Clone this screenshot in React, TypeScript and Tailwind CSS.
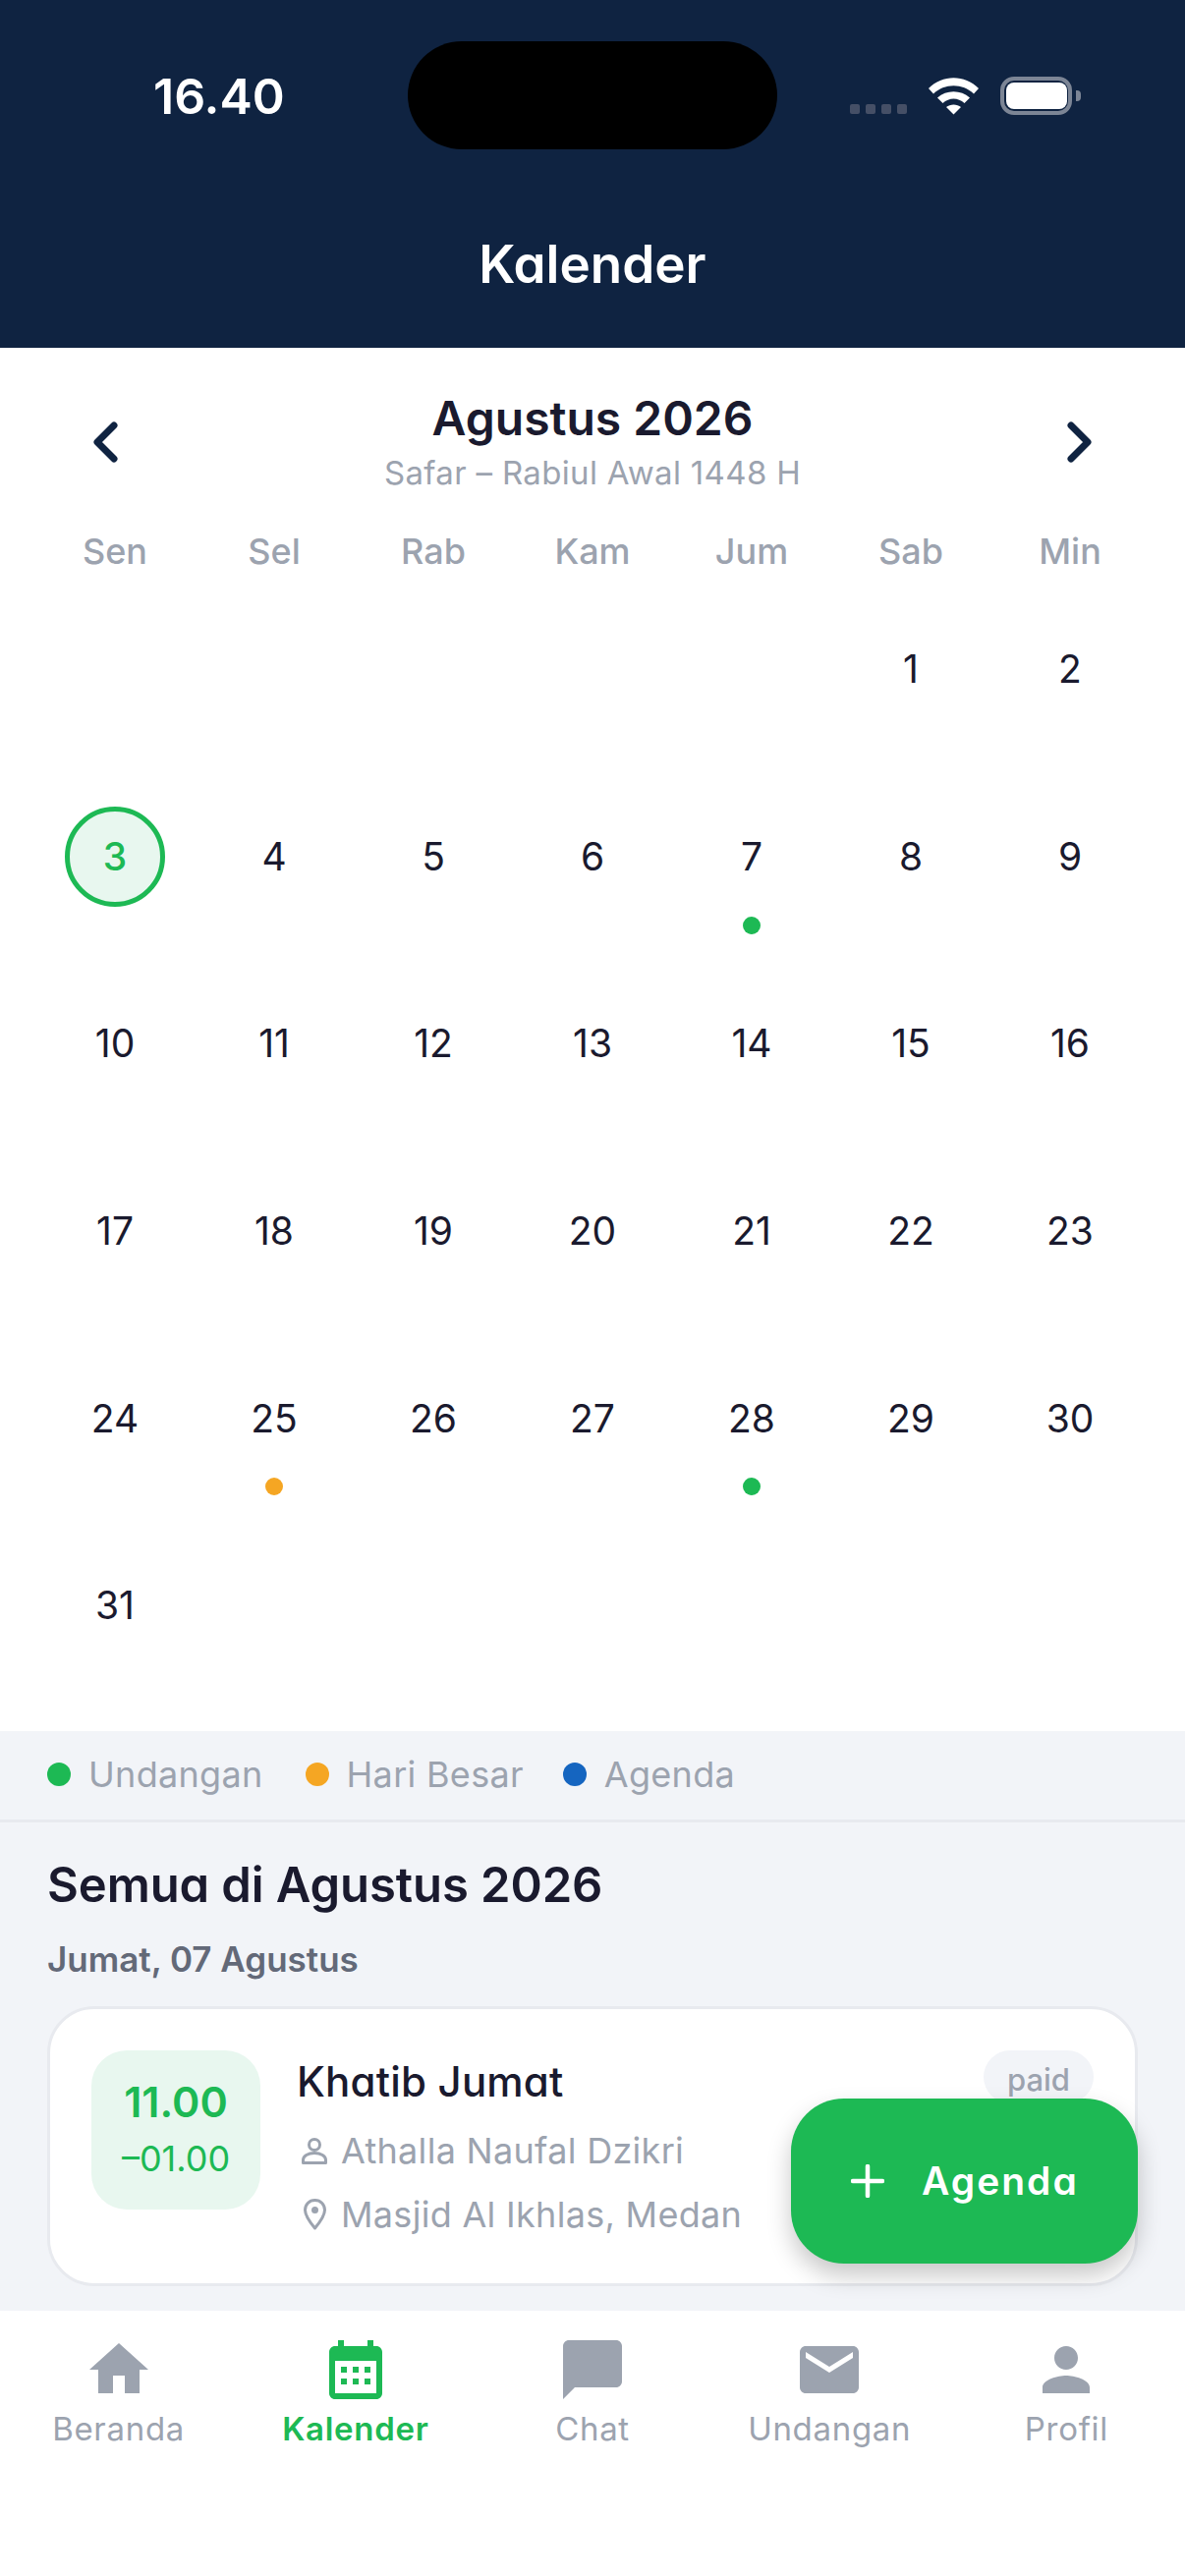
import React from "react";

const weekdays = ["Sen", "Sel", "Rab", "Kam", "Jum", "Sab", "Min"];
const blanks = [0, 1, 2, 3, 4];
const days = Array.from({ length: 31 }, (_, i) => i + 1);
const dots: Record<number, string> = { 7: "bg-[#1db954]", 25: "bg-[#f5a623]", 28: "bg-[#1db954]" };

const heading = "font-['Inter',sans-serif] [font-feature-settings:'cv11']";

function NavIcon({ d, fillRule }: { d: string; fillRule?: "evenodd" }) {
  return (
    <svg viewBox="0 0 24 24" className="h-[72px] w-[72px]" fill="currentColor">
      <path d={d} fillRule={fillRule} />
    </svg>
  );
}

const nav = [
  { label: "Beranda", d: "M10 20v-6h4v6h5v-8h3L12 3 2 12h3v8z" },
  {
    label: "Kalender",
    active: true,
    d: "M19 4h-1V2h-2v2H8V2H6v2H5c-1.11 0-1.99.9-1.99 2L3 20c0 1.1.89 2 2 2h14c1.1 0 2-.9 2-2V6c0-1.1-.9-2-2-2zm0 16H5V9h14v11zM7 11h2v2H7zm4 0h2v2h-2zm4 0h2v2h-2zM7 15h2v2H7zm4 0h2v2h-2zm4 0h2v2h-2z",
  },
  { label: "Chat", d: "M20 2H4c-1.1 0-1.99.9-1.99 2L2 22l4-4h14c1.1 0 2-.9 2-2V4c0-1.1-.9-2-2-2z" },
  { label: "Undangan", d: "M20 4H4c-1.1 0-1.99.9-1.99 2L2 18c0 1.1.9 2 2 2h16c1.1 0 2-.9 2-2V6c0-1.1-.9-2-2-2zm0 4l-8 5-8-5V6l8 5 8-5v2z" },
  { label: "Profil", d: "M12 12c2.21 0 4-1.79 4-4s-1.79-4-4-4-4 1.79-4 4 1.79 4 4 4zm0 2c-2.67 0-8 1.34-8 4v2h16v-2c0-2.66-5.33-4-8-4z" },
];

function StatusBar() {
  return (
    <div className="relative h-[170px] shrink-0">
      <div className="absolute left-[415px] top-[42px] h-[110px] w-[376px] rounded-[55px] bg-black" />
      <div className="absolute left-[156px] top-[61px] text-[50px] font-semibold leading-[74px] text-white">16.40</div>
      <div className="absolute left-[865px] top-[78px] flex h-[40px] items-start">
        <div className="mt-[28px] flex gap-[6px]">
          <div className="h-[10px] w-[10px] rounded-[2px] bg-[#454f66]" />
          <div className="h-[10px] w-[10px] rounded-[2px] bg-[#454f66]" />
          <div className="h-[10px] w-[10px] rounded-[2px] bg-[#454f66]" />
          <div className="h-[10px] w-[10px] rounded-[2px] bg-[#454f66]" />
        </div>
        <svg viewBox="0 0 51 38" className="ml-[22px] mt-[1px] h-[38px] w-[51px]" fill="#fff">
          <path d="M0 11C14-3.5 37-3.5 51 11l-5 5.5C35 5.500 16 5.500 5 16.500Z" />
          <path d="M9 20.500C18 12 33 12 42 20.500L36.500 26C30 20 21 20 14.500 26Z" />
          <path d="M18 30c4-3.500 11-3.500 15 0l-7.500 7.500Z" />
        </svg>
        <div className="ml-[22px] flex h-[39px] w-[73px] items-center justify-center rounded-[14px] border-[4px] border-[#7c8595]">
          <div className="h-[27px] w-[62px] rounded-[8px] bg-white" />
        </div>
        <div className="ml-[4px] mt-[14px] h-[11px] w-[5px] rounded-r-[4px] bg-[#7c8595]" />
      </div>
    </div>
  );
}

export default function App() {
  return (
    <div className="relative flex h-[2622px] w-[1206px] flex-col overflow-hidden bg-white font-['Inter',sans-serif]">
      <header className="flex h-[354px] shrink-0 flex-col bg-[#0f2341]">
        <StatusBar />
        <h1 className={`${heading} mt-[61px] text-center text-[53px] font-semibold leading-[76px] text-white`}>Kalender</h1>
      </header>

      <section className="h-[1408px] shrink-0 bg-white">
        <div className="flex items-center justify-between px-[94px] pt-[39px]">
          <svg viewBox="0 0 26 42" className="mt-[4px] h-[42px] w-[26px]" fill="none" stroke="#0f2341" strokeWidth="7" strokeLinecap="round" strokeLinejoin="round">
            <path d="M22 4 5 21l17 17" />
          </svg>
          <div className="text-center">
            <div className={`${heading} text-[48px] font-semibold leading-[66px] text-[#1a1a2e]`}>Agustus 2026</div>
            <div className="text-[33px] leading-[44px] tracking-[0.33px] text-[#9ca3af]">Safar – Rabiul Awal 1448 H</div>
          </div>
          <svg viewBox="0 0 26 42" className="mt-[4px] h-[42px] w-[26px]" fill="none" stroke="#0f2341" strokeWidth="7" strokeLinecap="round" strokeLinejoin="round">
            <path d="m4 4 17 17L4 38" />
          </svg>
        </div>

        <div className="grid grid-cols-7 px-[36px] pt-[31px]">
          {weekdays.map((d) => (
            <div key={d} className="text-center text-[36px] font-medium leading-[54px] text-[#9ca3af]">{d}</div>
          ))}
        </div>

        <div className="-mt-[2px] grid auto-rows-[190.6px] grid-cols-7 px-[36px]">
          {blanks.map((b) => (
            <div key={b} />
          ))}
          {days.map((d) => (
            <div key={d} className="relative flex items-center justify-center">
              {d === 3 ? (
                <div className="flex h-[102px] w-[102px] items-center justify-center rounded-full border-[5px] border-[#1db954] bg-[#e8f7ef] text-[39px] font-medium text-[#1db954]">3</div>
              ) : (
                <span className="text-[39px] leading-[102px] text-[#1a1a2e]">{d}</span>
              )}
              {dots[d] && <div className={`absolute left-1/2 top-[156px] h-[18px] w-[18px] -translate-x-1/2 rounded-full ${dots[d]}`} />}
            </div>
          ))}
        </div>
      </section>

      <div className="flex h-[93px] shrink-0 items-center border-b-[3px] border-[#e8eaef] bg-[#f2f4f8] pb-[3px] pl-[48px] text-[36px] leading-[54px] tracking-[0.3px] text-[#9ca3af]">
        <span className="h-[24px] w-[24px] rounded-full bg-[#1db954]" />
        <span className="ml-[18px]">Undangan</span>
        <span className="ml-[43px] h-[24px] w-[24px] rounded-full bg-[#f5a623]" />
        <span className="ml-[18px]">Hari Besar</span>
        <span className="ml-[40px] h-[24px] w-[24px] rounded-full bg-[#1565c0]" />
        <span className="ml-[18px]">Agenda</span>
      </div>

      <main className="min-h-0 flex-1 overflow-hidden bg-[#f2f4f8] px-[48px] pt-[28px]">
        <h2 className={`${heading} text-[49px] font-semibold leading-[72px] tracking-[-0.1px] text-[#1a1a2e]`}>Semua di Agustus 2026</h2>
        <h3 className="mt-[12px] text-[35px] font-semibold leading-[54px] text-[#636978]">Jumat, 07 Agustus</h3>
        <div className="mt-[21px] flex h-[285px] gap-[37px] rounded-[48px] border-[3px] border-[#e8eaef] bg-white p-[42px]">
          <div className="flex h-[162px] w-[172px] shrink-0 flex-col items-center justify-center rounded-[36px] bg-[#e8f7ef] text-[#1db954]">
            <div className="-mt-[4px] text-[43px] font-semibold leading-[54px]">11.00</div>
            <div className="mt-[7px] text-[36px] leading-[48px]">–01.00</div>
          </div>
          <div className="min-w-0 flex-1">
            <div className="flex items-start justify-between">
              <div className={`${heading} mt-[2px] text-[42px] font-medium leading-[60px] tracking-[0.2px] text-[#1a1a2e]`}>Khatib Jumat</div>
              <div className="rounded-[27px] bg-[#f2f4f8] px-[24px] pb-[3px] pt-[9px] text-[31px] font-medium leading-[42px] text-[#9ca3af]">paid</div>
            </div>
            <div className="mt-[13px] flex items-center gap-[9px] text-[36px] leading-[54px] tracking-[0.3px] text-[#9ca3af]">
              <div className="flex w-[36px] justify-center">
                <svg viewBox="0 0 26 27" className="h-[27px] w-[26px]" fill="none" stroke="currentColor" strokeWidth="3">
                  <circle cx="13" cy="7" r="5.500" />
                  <path d="M1.500 25.500v-3c0-4 5-7 11.500-7s11.500 3 11.500 7v3z" strokeLinejoin="round" />
                </svg>
              </div>
              Athalla Naufal Dzikri
            </div>
            <div className="mt-[11px] flex items-center gap-[9px] text-[36px] leading-[54px] tracking-[0.3px] text-[#9ca3af]">
              <div className="flex w-[36px] justify-center">
                <svg viewBox="0 0 23 32" className="h-[32px] w-[23px]" fill="none" stroke="currentColor" strokeWidth="3">
                  <path d="M11.500 1.500C5.500 1.500 1.500 6 1.500 11.500 1.500 18 11.500 30 11.500 30s10-12 10-18.500c0-5.500-4-10-10-10Z" strokeLinejoin="round" />
                  <circle cx="11.500" cy="11.500" r="3.500" fill="currentColor" stroke="none" />
                </svg>
              </div>
              Masjid Al Ikhlas, Medan
            </div>
          </div>
        </div>
      </main>

      <button className={`${heading} absolute left-[805px] top-[2136px] z-10 flex h-[168px] w-[353px] items-center rounded-[54px] bg-[#1db954] pl-[61px] text-[39px] font-semibold tracking-[2px] text-white shadow-[0_12px_24px_rgba(0,0,0,0.22)]`}>
        <svg viewBox="0 0 34 34" className="h-[34px] w-[34px]" fill="none" stroke="#fff" strokeWidth="4.500" strokeLinecap="round">
          <path d="M17 2v30M2 17h30" />
        </svg>
        <span className="ml-[38px]">Agenda</span>
      </button>

      <nav className="relative z-20 flex h-[270px] shrink-0 bg-white pt-[24px]">
        {nav.map((n) => (
          <div key={n.label} className={`flex flex-1 flex-col items-center ${n.active ? "text-[#1db954]" : "text-[#9ca3af]"}`}>
            <NavIcon d={n.d} />
            <span className={`text-[33px] leading-[48px] tracking-[0.7px] ${n.active ? "font-semibold" : "font-normal"}`}>{n.label}</span>
          </div>
        ))}
      </nav>
    </div>
  );
}
